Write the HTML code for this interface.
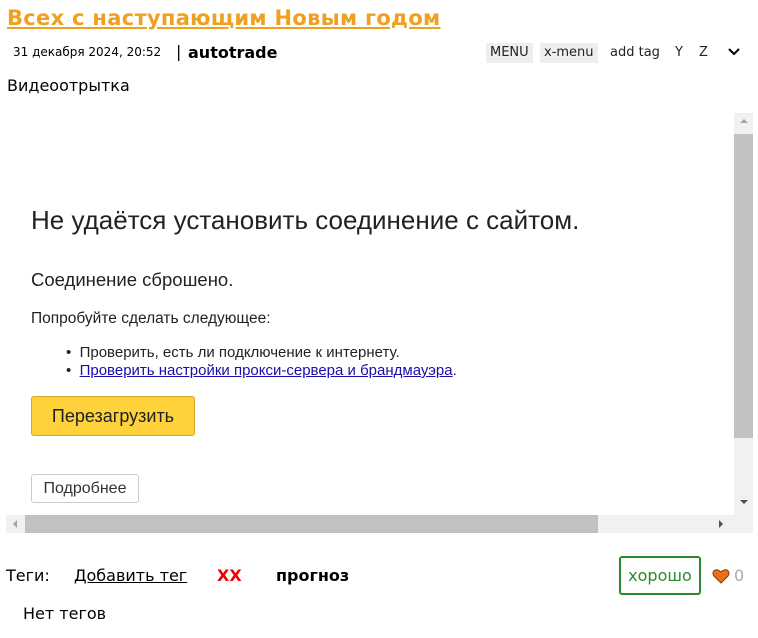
<!DOCTYPE html>
<html><head><meta charset="utf-8"><style>
body{margin:0;background:#fff;font-family:"DejaVu Sans","Liberation Sans",sans-serif;color:#000;width:758px;height:638px;overflow:hidden;position:relative}
.a{position:absolute;white-space:nowrap}
h1{position:absolute;left:7px;top:6px;margin:0;font:bold 21px "DejaVu Sans",sans-serif;color:#f0a020;text-decoration:underline;letter-spacing:0.3px}
.btn{position:absolute;top:43px;height:20px;line-height:20px;font-size:13px;padding:0 4px;color:#222}
.fr{position:absolute;left:6px;top:113px;width:747px;height:420px;background:#fff;font-family:"Liberation Sans",Arial,sans-serif;overflow:hidden}
</style></head><body>
<h1>Всех с наступающим Новым годом</h1>
<div class="a" style="left:13px;top:45px;font-size:12px">31 декабря 2024, 20:52</div>
<div class="a" style="left:176px;top:42px;font-size:16px">|</div>
<div class="a" style="left:188px;top:43px;font-size:16px;font-weight:bold">autotrade</div>
<div class="btn" style="left:486px;background:#eee">MENU</div>
<div class="btn" style="left:540px;background:#eee">x-menu</div>
<div class="btn" style="left:606px">add tag</div>
<div class="btn" style="left:671px">Y</div>
<div class="btn" style="left:695px">Z</div>
<svg class="a" style="left:727px;top:47px" width="14" height="10"><path d="M2 2 L7 7 L12 2" stroke="#000" stroke-width="2" fill="none"/></svg>
<div class="a" style="left:7px;top:76px;font-size:16px">Видеоотрытка</div>
<div class="fr">
 <div class="a" style="left:25px;top:92px;font-size:26px;color:#222">Не удаётся установить соединение с сайтом.</div>
 <div class="a" style="left:25px;top:156px;font-size:18.5px;color:#222">Соединение сброшено.</div>
 <div class="a" style="left:25px;top:197px;font-size:15.5px;color:#222">Попробуйте сделать следующее:</div>
 <div class="a" style="left:60px;top:231px;font-size:15px;color:#222">•&nbsp; Проверить, есть ли подключение к интернету.</div>
 <div class="a" style="left:60px;top:249px;font-size:15px;color:#222">•&nbsp; <span style="color:#1a0dab;text-decoration:underline">Проверить настройки прокси-сервера и брандмауэра</span>.</div>
 <div class="a" style="left:25px;top:283px;width:162px;height:38px;background:#fdd23a;border:1px solid #d9a820;border-radius:3px;font-size:18px;line-height:38px;text-align:center;color:#222">Перезагрузить</div>
 <div class="a" style="left:25px;top:361px;width:106px;height:27px;border:1px solid #ccc;border-radius:3px;font-size:16px;line-height:27px;text-align:center;color:#333">Подробнее</div>
 <div class="a" style="left:728px;top:0;width:19px;height:402px;background:#f1f1f1"></div>
 <div class="a" style="left:728px;top:21px;width:19px;height:304px;background:#c1c1c1"></div>
 <div class="a" style="left:734px;top:6px;width:0;height:0;border:4px solid transparent;border-bottom:4px solid #a3a3a3;border-top:0"></div>
 <div class="a" style="left:734px;top:387px;width:0;height:0;border:4px solid transparent;border-top:4px solid #505050;border-bottom:0"></div>
 <div class="a" style="left:0;top:402px;width:747px;height:18px;background:#f1f1f1"></div>
 <div class="a" style="left:19px;top:402px;width:573px;height:18px;background:#c1c1c1"></div>
 <div class="a" style="left:7px;top:407px;width:0;height:0;border:4px solid transparent;border-right:4px solid #a3a3a3;border-left:0"></div>
 <div class="a" style="left:713px;top:407px;width:0;height:0;border:4px solid transparent;border-left:4px solid #505050;border-right:0"></div>
</div>
<div class="a" style="left:6px;top:566px;font-size:16px">Теги:</div>
<div class="a" style="left:74px;top:566px;font-size:16px;text-decoration:underline">Добавить тег</div>
<div class="a" style="left:217px;top:566px;font-size:16px;font-weight:bold;color:#e00">XX</div>
<div class="a" style="left:276px;top:566px;font-size:16px;font-weight:bold">прогноз</div>
<div class="a" style="left:619px;top:556px;width:78px;height:35px;border:2px solid #2a8a2a;border-radius:3px;color:#2a8a2a;font-size:16px;line-height:35px;text-align:center">хорошо</div>
<svg class="a" style="left:712px;top:568px" width="18" height="16"><path d="M9 15 L2 8 C-1 4 3 -1 9 4 C15 -1 19 4 16 8 Z" fill="#e8701a" stroke="#8a3a00" stroke-width="1"/></svg>
<div class="a" style="left:734px;top:566px;font-size:16px;color:#aaa">0</div>
<div class="a" style="left:23px;top:604px;font-size:16px">Нет тегов</div>
</body></html>
